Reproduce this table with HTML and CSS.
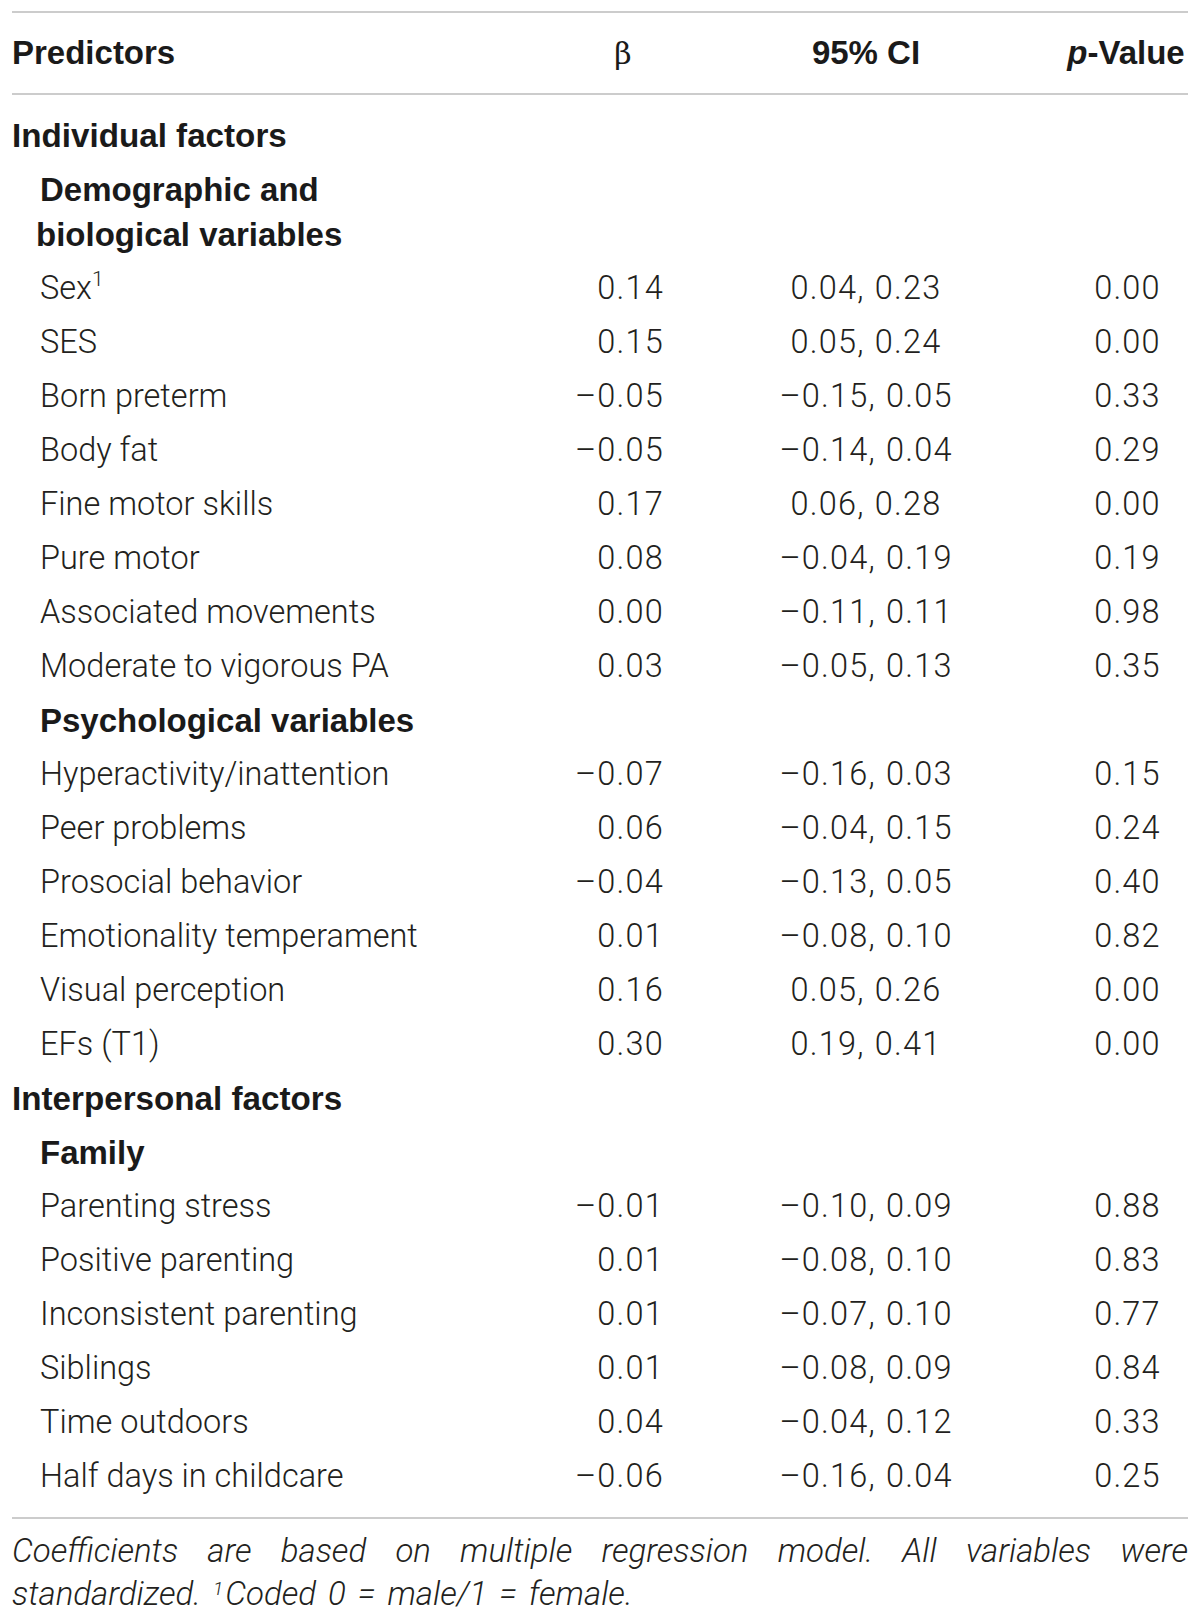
FILE: index.html
```html
<!DOCTYPE html>
<html lang="en">
<head>
<meta charset="utf-8">
<title>Table</title>
<link rel="stylesheet" href="styles.css">
</head>
<body>
<div class="wrap">
<table class="tbl">
  <colgroup>
    <col class="c1"><col class="c2"><col class="c3"><col class="c4">
  </colgroup>
  <thead>
    <tr>
      <th class="h-pred">Predictors</th>
      <th class="h-beta">β</th>
      <th class="h-ci">95% CI</th>
      <th class="h-p"><i>p</i>-Value</th>
    </tr>
  </thead>
  <tbody>
    <tr class="first"><td class="lvl1" colspan="4">Individual factors</td></tr>
    <tr><td class="lvl2 two" colspan="4">Demographic and<br>biological variables</td></tr>
    <tr><td class="lbl">Sex<sup>1</sup></td><td class="b">0.14</td><td class="ci">0.04, 0.23</td><td class="p">0.00</td></tr>
    <tr><td class="lbl">SES</td><td class="b">0.15</td><td class="ci">0.05, 0.24</td><td class="p">0.00</td></tr>
    <tr><td class="lbl">Born preterm</td><td class="b">–0.05</td><td class="ci">–0.15, 0.05</td><td class="p">0.33</td></tr>
    <tr><td class="lbl">Body fat</td><td class="b">–0.05</td><td class="ci">–0.14, 0.04</td><td class="p">0.29</td></tr>
    <tr><td class="lbl">Fine motor skills</td><td class="b">0.17</td><td class="ci">0.06, 0.28</td><td class="p">0.00</td></tr>
    <tr><td class="lbl">Pure motor</td><td class="b">0.08</td><td class="ci">–0.04, 0.19</td><td class="p">0.19</td></tr>
    <tr><td class="lbl">Associated movements</td><td class="b">0.00</td><td class="ci">–0.11, 0.11</td><td class="p">0.98</td></tr>
    <tr><td class="lbl">Moderate to vigorous PA</td><td class="b">0.03</td><td class="ci">–0.05, 0.13</td><td class="p">0.35</td></tr>
    <tr><td class="lvl2" colspan="4">Psychological variables</td></tr>
    <tr><td class="lbl">Hyperactivity/inattention</td><td class="b">–0.07</td><td class="ci">–0.16, 0.03</td><td class="p">0.15</td></tr>
    <tr><td class="lbl">Peer problems</td><td class="b">0.06</td><td class="ci">–0.04, 0.15</td><td class="p">0.24</td></tr>
    <tr><td class="lbl">Prosocial behavior</td><td class="b">–0.04</td><td class="ci">–0.13, 0.05</td><td class="p">0.40</td></tr>
    <tr><td class="lbl">Emotionality temperament</td><td class="b">0.01</td><td class="ci">–0.08, 0.10</td><td class="p">0.82</td></tr>
    <tr><td class="lbl">Visual perception</td><td class="b">0.16</td><td class="ci">0.05, 0.26</td><td class="p">0.00</td></tr>
    <tr><td class="lbl">EFs (T1)</td><td class="b">0.30</td><td class="ci">0.19, 0.41</td><td class="p">0.00</td></tr>
    <tr><td class="lvl1" colspan="4">Interpersonal factors</td></tr>
    <tr><td class="lvl2" colspan="4">Family</td></tr>
    <tr><td class="lbl">Parenting stress</td><td class="b">–0.01</td><td class="ci">–0.10, 0.09</td><td class="p">0.88</td></tr>
    <tr><td class="lbl">Positive parenting</td><td class="b">0.01</td><td class="ci">–0.08, 0.10</td><td class="p">0.83</td></tr>
    <tr><td class="lbl">Inconsistent parenting</td><td class="b">0.01</td><td class="ci">–0.07, 0.10</td><td class="p">0.77</td></tr>
    <tr><td class="lbl">Siblings</td><td class="b">0.01</td><td class="ci">–0.08, 0.09</td><td class="p">0.84</td></tr>
    <tr><td class="lbl">Time outdoors</td><td class="b">0.04</td><td class="ci">–0.04, 0.12</td><td class="p">0.33</td></tr>
    <tr class="last"><td class="lbl">Half days in childcare</td><td class="b">–0.06</td><td class="ci">–0.16, 0.04</td><td class="p">0.25</td></tr>
  </tbody>
</table>
<p class="note">Coefficients are based on multiple regression model. All variables were standardized. <sup>1</sup>Coded 0 = male/1 = female.</p>
</div>
</body>
</html>
```

FILE: styles.css
```css
html, body {
  margin: 0;
  padding: 0;
  background: #ffffff;
}

.wrap {
  padding: 11px 12px 0 12px;
  color: #231f20;
  font-family: Roboto, "Liberation Sans", sans-serif;
  font-weight: 300;
}

.tbl {
  width: 100%;
  border-collapse: collapse;
  table-layout: fixed;
  border-top: 2px solid #cccccc;
  border-bottom: 2px solid #cccccc;
}

.c1 { width: 548px; }
.c2 { width: 140px; }
.c3 { width: 332px; }
.c4 { width: 156px; }

thead tr {
  border-bottom: 2px solid #cccccc;
}

th {
  height: 80px;
  padding: 0;
  font-family: "Liberation Sans", Arial, sans-serif;
  font-weight: 700;
  font-size: 33px;
  color: #1a1a1a;
  vertical-align: middle;
}

.h-pred { text-align: left; }
.h-beta {
  text-align: center;
  padding-right: 14px;
  font-family: "DejaVu Serif", "Liberation Serif", serif;
  font-weight: 400;
  font-size: 30px;
}
.h-ci { text-align: center; }
.h-p { text-align: center; padding-left: 32px; }
.h-p i { font-style: italic; }

td {
  padding: 5.5px 0 3.5px 0;
  font-size: 32.5px;
  line-height: 45px;
  white-space: nowrap;
}

tr.first td { padding-top: 18px; }
tr.last td { padding-bottom: 18px; }

.lvl1 {
  font-family: "Liberation Sans", Arial, sans-serif;
  font-weight: 700;
  font-size: 33.2px;
  color: #1a1a1a;
}

.lvl2 {
  font-family: "Liberation Sans", Arial, sans-serif;
  font-weight: 700;
  font-size: 33px;
  color: #1a1a1a;
  padding-left: 28px;
}

.lvl2.two {
  padding-left: 24px;
  text-indent: 4px;
}

.lbl { padding-left: 28px; }

.lbl sup {
  font-size: 21px;
  line-height: 0;
  vertical-align: 13px;
}

.b, .ci, .p { letter-spacing: 1.2px; }

.b { text-align: right; padding-right: 36px; }
.ci { text-align: center; word-spacing: 1px; }
.p { text-align: center; padding-left: 35px; }

.note {
  margin: 10px 0 0 0;
  font-style: italic;
  font-size: 33px;
  line-height: 43px;
  text-align: justify;
  word-spacing: 4px;
}

.note sup {
  font-size: 19px;
  line-height: 0;
  vertical-align: 10px;
  margin-right: 2px;
}
```
